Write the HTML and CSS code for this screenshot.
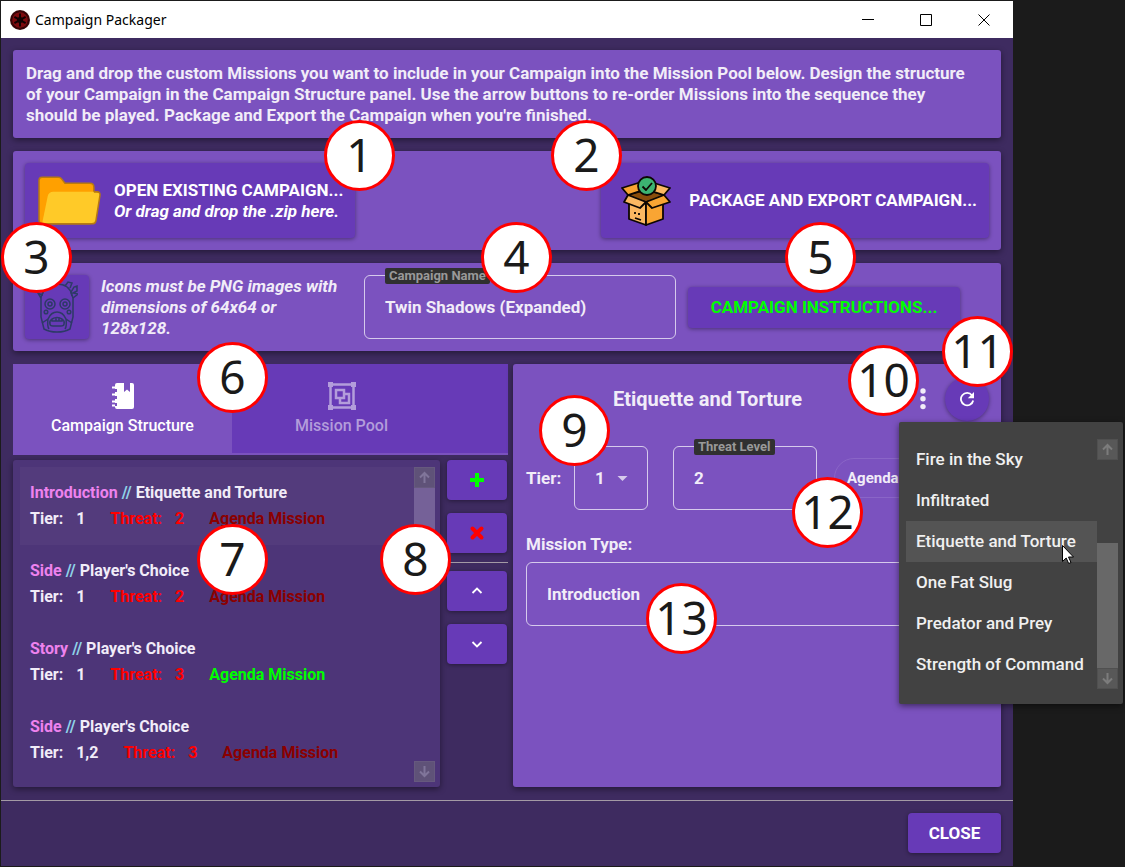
FILE: index.html
```html
<!DOCTYPE html>
<html lang="en">
<head>
<meta charset="utf-8">
<title>Campaign Packager</title>
<link rel="stylesheet" href="styles.css">
</head>
<body>
<div class="stage">
  <main class="window">
    <header class="titlebar">
      <svg class="app-icon" viewBox="0 0 20 20" aria-hidden="true">
        <circle cx="10" cy="10" r="10" fill="#3a0508"/>
        <circle cx="10" cy="10" r="7.8" fill="#7d0a0e"/>
        <path d="M10 3.5v13M4.4 6.8l11.2 6.4M4.4 13.2l11.2-6.4" stroke="#120102" stroke-width="2"/>
        <circle cx="10" cy="10" r="3" fill="#120102"/>
        <circle cx="10" cy="10" r="8.4" fill="none" stroke="#2a0305" stroke-width="1" stroke-dasharray="3 5.8"/>
      </svg>
      <h1 class="app-title">Campaign Packager</h1>
      <div class="caption">
        <button class="caption-btn" type="button" aria-label="Minimize"><svg viewBox="0 0 12 12"><path d="M0 5.500h12"/></svg></button>
        <button class="caption-btn" type="button" aria-label="Maximize"><svg viewBox="0 0 12 12"><path d="M.5.5h11v11H.5z"/></svg></button>
        <button class="caption-btn" type="button" aria-label="Close window"><svg viewBox="0 0 12 12"><path d="M.5.5l11 11M11.500.5l-11 11"/></svg></button>
      </div>
    </header>

    <div class="content">
      <section class="card intro">
        <p>Drag and drop the custom Missions you want to include in your Campaign into the Mission Pool below. Design the structure<br>of your Campaign in the Campaign Structure panel. Use the arrow buttons to re-order Missions into the sequence they<br>should be played. Package and Export the Campaign when you're finished.</p>
      </section>

      <section class="card actions">
        <button class="btn big" type="button">
          <svg class="folder" viewBox="0 0 64 48" aria-hidden="true">
            <path d="M5 1h16q2 0 3 1.500l3.500 4.500H52q4 0 4 4v5l-4 31H6q-4 0-4-4V4q0-3 3-3z" fill="#ffa000" stroke="#b87a10" stroke-width="1.500"/>
            <path d="M16 15.500h43q3.500 0 3 3.500l-4 25q-.5 3-4 3H6.500q-1.500 0-1-2.500l5-24.500q1-4.500 5.500-4.500z" fill="#ffca28"/>
            <path d="M56 15.500h3q3.500 0 3 3.500l-4 25q-.5 3-4 3H6" fill="none" stroke="#b87a10" stroke-width="1.500"/>
          </svg>
          <span class="btn-text">OPEN EXISTING CAMPAIGN...<em>Or drag and drop the .zip here.</em></span>
        </button>
        <button class="btn big" type="button">
          <svg class="box" viewBox="0 0 50 50" aria-hidden="true">
            <g stroke="#0d0703" stroke-width="1.800" stroke-linejoin="round">
              <path d="M7 19l18-5 18 5-18 9z" fill="#8a4d0b"/>
              <path d="M8 21l17 5v23L8 43z" fill="#fbb862"/>
              <path d="M25 26l17-5v22l-17 6z" fill="#f9a533"/>
              <path d="M7 19L1 12l16-5 5 7z" fill="#f9a533"/>
              <path d="M43 19l6-7-16-5-6 7z" fill="#fbb862"/>
              <path d="M7 19l18 7-6 6-16-6z" fill="#fbb862"/>
              <path d="M43 19l-18 7 6 6 18-6z" fill="#f9a533"/>
              <path d="M14 36v2M18 37v2M14 42l6 2" fill="none"/>
              <circle cx="26" cy="10" r="9" fill="#3cb371"/>
              <path d="M21.500 10.500l3.500 3.500 6-7" fill="none"/>
            </g>
          </svg>
          <span class="btn-text">PACKAGE AND EXPORT CAMPAIGN...</span>
        </button>
      </section>

      <section class="card identity">
        <button class="btn icon-btn" type="button" aria-label="Campaign icon">
          <svg viewBox="0 0 42 52" fill="none" stroke="#2d3a66" stroke-width="1.500" aria-hidden="true">
            <path d="M6 14Q9 3 21 3t15 11l1 3v19l-3 12q-5 3-13 3T8 48L5 36V16z"/>
            <path d="M5 17L2 12l4 2 1-3M36 15l-1-4 3-5 3-1v5l-4 2 5 1-5 4M29 5l3-4 4 1-2 5"/>
            <circle cx="14" cy="23" r="5"/><circle cx="14" cy="23" r="2"/>
            <circle cx="29" cy="23" r="5"/><circle cx="29" cy="23" r="2"/>
            <circle cx="10" cy="31" r="1.800"/><circle cx="33" cy="31" r="1.800"/>
            <path d="M6 42l6-4q3-7 9-7t9 7l6 4M12 38q-1 7 1 10M30 38q1 7-1 10M14 43q-1-3 2-5 5-3 10 0 3 2 2 5 0 2-3 2h-8q-3 0-3-2zM16 38v2h10v-2M20 36v4M23 36v4"/>
          </svg>
        </button>
        <p class="hint">Icons must be PNG images with<br>dimensions of 64x64 or<br>128x128.</p>
        <div class="field name-field">
          <label class="tag" for="campaign-name">Campaign Name</label>
          <input id="campaign-name" type="text" value="Twin Shadows (Expanded)">
        </div>
        <button class="btn instructions" type="button">CAMPAIGN INSTRUCTIONS...</button>
      </section>

      <div class="workspace">
        <section class="left">
          <div class="tabs" role="tablist">
            <button class="tab active" type="button" role="tab" aria-selected="true">
              <svg viewBox="0 0 28 28" aria-hidden="true"><path fill="#fff" d="M8 1h7v9l3-2.500 3 2.500V1h2q2 0 2 2v22q0 2-2 2H8q-2 0-2-2v-1h2v-3H6v-4h2v-3H6v-4h2V7H6V3q0-2 2-2z"/><path d="M3 5.500h3M3 12.500h3M3 19.500h3M3 23.500h3" stroke="#fff" stroke-width="2"/></svg>
              Campaign Structure
            </button>
            <button class="tab" type="button" role="tab" aria-selected="false">
              <svg viewBox="0 0 28 28" aria-hidden="true"><g fill="none" stroke="#b39ddb" stroke-width="2.500"><path d="M2.500 2.500h23v23h-23z"/><path d="M8 8h8v8H8z"/><path d="M16 12h5v9h-9v-5"/></g><path fill="#b39ddb" d="M0 0h5v5H0zM23 0h5v5h-5zM0 23h5v5H0zM23 23h5v5h-5z"/></svg>
              Mission Pool
            </button>
          </div>
          <div class="structure">
            <div class="list-card">
              <ul class="missions">
                <li class="mission selected"><div><span class="kind">Introduction</span> <span class="sep">//</span> Etiquette and Torture</div><div class="stats"><span>Tier:</span><span class="tier">1</span><span class="threat">Threat:</span><span class="threat num">2</span><span class="agenda">Agenda Mission</span></div></li>
                <li class="mission"><div><span class="kind">Side</span> <span class="sep">//</span> Player's Choice</div><div class="stats"><span>Tier:</span><span class="tier">1</span><span class="threat">Threat:</span><span class="threat num">2</span><span class="agenda">Agenda Mission</span></div></li>
                <li class="mission"><div><span class="kind">Story</span> <span class="sep">//</span> Player's Choice</div><div class="stats"><span>Tier:</span><span class="tier">1</span><span class="threat">Threat:</span><span class="threat num">3</span><span class="agenda on">Agenda Mission</span></div></li>
                <li class="mission"><div><span class="kind">Side</span> <span class="sep">//</span> Player's Choice</div><div class="stats"><span>Tier:</span><span class="tier">1,2</span><span class="threat">Threat:</span><span class="threat num">3</span><span class="agenda">Agenda Mission</span></div></li>
              </ul>
              <div class="scrollbar">
                <button class="scroll-btn" type="button" aria-label="Scroll up"><svg viewBox="0 0 21 21"><path d="M10.500 16V6M6 10.500L10.500 6l4.500 4.500"/></svg></button>
                <div class="thumb"></div>
                <button class="scroll-btn end" type="button" aria-label="Scroll down"><svg viewBox="0 0 21 21"><path d="M10.500 5v10M6 10.500l4.500 4.500 4.500-4.500"/></svg></button>
              </div>
            </div>
            <div class="tools">
              <button class="btn tool" type="button" aria-label="Add mission"><svg viewBox="0 0 16 16"><path d="M8 1v14M1 8h14" stroke="#0f0" stroke-width="4"/></svg></button>
              <button class="btn tool" type="button" aria-label="Remove mission"><svg viewBox="0 0 16 16"><path d="M3.500 3.500l9 9M12.500 3.500l-9 9" stroke="#f00" stroke-width="4" stroke-linecap="round"/></svg></button>
              <hr>
              <button class="btn tool" type="button" aria-label="Move up"><svg viewBox="0 0 16 16"><path d="M3.500 10L8 5.500l4.500 4.500" stroke="#fff" stroke-width="1.800" fill="none"/></svg></button>
              <button class="btn tool" type="button" aria-label="Move down"><svg viewBox="0 0 16 16"><path d="M3.500 6L8 10.500 12.500 6" stroke="#fff" stroke-width="1.800" fill="none"/></svg></button>
            </div>
          </div>
        </section>

        <section class="card details">
          <div class="details-head">
            <h2>Etiquette and Torture</h2>
            <button class="kebab" type="button" aria-label="Choose mission"><svg viewBox="0 0 6 22"><circle cx="3" cy="3" r="2.700"/><circle cx="3" cy="10.800" r="2.700"/><circle cx="3" cy="18.600" r="2.700"/></svg></button>
            <button class="btn round" type="button" aria-label="Refresh"><svg viewBox="0 0 16 16"><path d="M13 4.300A6.200 6.200 0 1 0 14.200 9.500" fill="none" stroke="#fff" stroke-width="1.800"/><path d="M15 1v6.200H8.800z" fill="#fff"/></svg></button>
          </div>
          <div class="details-row">
            <label for="tier">Tier:</label>
            <div class="field tier-field">
              <select id="tier"><option>1</option><option>2</option><option>3</option></select>
              <svg class="caret" viewBox="0 0 10 5" aria-hidden="true"><path d="M0 0h10L5 5z"/></svg>
            </div>
            <div class="field threat-field">
              <label class="tag" for="threat">Threat Level</label>
              <input id="threat" type="text" value="2">
            </div>
            <button class="chip" type="button">Agenda Mission</button>
          </div>
          <label class="type-label" for="mission-type">Mission Type:</label>
          <div class="field">
            <select id="mission-type"><option>Introduction</option><option>Side</option><option>Story</option></select>
          </div>
        </section>
      </div>
    </div>

    <footer class="footer">
      <button class="btn close" type="button">CLOSE</button>
    </footer>
  </main>

  <div class="popup">
    <ul class="menu">
      <li><button type="button">Fire in the Sky</button></li>
      <li><button type="button">Infiltrated</button></li>
      <li><button class="hover" type="button">Etiquette and Torture</button></li>
      <li><button type="button">One Fat Slug</button></li>
      <li><button type="button">Predator and Prey</button></li>
      <li><button type="button">Strength of Command</button></li>
    </ul>
    <div class="scrollbar">
      <button class="scroll-btn" type="button" aria-label="Scroll up"><svg viewBox="0 0 21 21"><path d="M10.500 16V6M6 10.500L10.500 6l4.500 4.500"/></svg></button>
      <div class="thumb"></div>
      <button class="scroll-btn" type="button" aria-label="Scroll down"><svg viewBox="0 0 21 21"><path d="M10.500 5v10M6 10.500l4.500 4.500 4.500-4.500"/></svg></button>
    </div>
  </div>
  <svg class="cursor" viewBox="0 0 12 19" aria-hidden="true"><path d="M.5.5v16l3.700-3.500 2.500 5.500 2.300-1-2.500-5.500h5z" fill="#fff" stroke="#000"/></svg>

  <span class="pin p1">1</span>
  <span class="pin p2">2</span>
  <span class="pin p3">3</span>
  <span class="pin p4">4</span>
  <span class="pin p5">5</span>
  <span class="pin p6">6</span>
  <span class="pin p7">7</span>
  <span class="pin p8">8</span>
  <span class="pin p9">9</span>
  <span class="pin p10">10</span>
  <span class="pin p11">11</span>
  <span class="pin p12">12</span>
  <span class="pin p13">13</span>
</div>
</body>
</html>
```

FILE: styles.css
```css
* { box-sizing: border-box; }
body, h1, h2, p, ul { margin: 0; padding: 0; }
ul { list-style: none; }
body { background: #1b1b1b; font: 700 17px/21px Roboto, sans-serif; color: #f1ecf8; }
button, input, select { font: inherit; color: inherit; border: 0; padding: 0; background: none; }
button { display: flex; align-items: center; justify-content: center; }
svg { display: block; flex: none; }

.stage { position: relative; display: flex; min-height: 100vh; padding: 1px 112px 1px 1px; }
.window { flex: 1; min-width: 0; display: flex; flex-direction: column; background: #3e2b60; }

.titlebar { display: flex; align-items: center; gap: 5px; height: 37px; padding-left: 9px; background: #fff; color: #000; }
.app-icon { width: 20px; height: 20px; }
.app-title { flex: 1; font: 400 14px/20px "Noto Sans", sans-serif; }
.caption { display: flex; align-self: stretch; }
.caption-btn { width: 58px; }
.caption-btn svg { width: 12px; height: 12px; fill: none; stroke: #000; stroke-width: 1; }

.content { flex: 1; display: flex; flex-direction: column; gap: 13px; padding: 12px 12px 13px; }
.card { background: #7b52bf; border-radius: 3px; box-shadow: 0 2px 6px rgba(0, 0, 0, .45); }
.btn { background: #673ab7; border-radius: 4px; box-shadow: 0 1px 4px rgba(0, 0, 0, .4); color: #fff; }
.intro { padding: 13px 12px 12px 13px; }

.actions { display: flex; justify-content: space-between; padding: 12px; }
.big { height: 75px; padding: 0 12px; gap: 12px; }
.folder { width: 65px; height: 49px; }
.box { width: 50px; height: 50px; margin: 0 6px 0 8px; }
.btn-text { text-align: left; }
.btn-text em { display: block; }

.identity { display: flex; align-items: center; gap: 12px; padding: 12px; }
.icon-btn { width: 64px; height: 64px; }
.icon-btn svg { width: 42px; height: 52px; }
.hint { width: 251px; font-style: italic; white-space: nowrap; }
.name-field { flex: 1; }
.instructions { width: 272px; height: 41px; margin-right: 29px; color: #0f0; }

.field { position: relative; height: 64px; border: 1px solid #d6caec; border-radius: 6px; }
.field input, .field select { width: 100%; height: 100%; padding: 0 20px; appearance: none; outline: 0; }
.tag { position: absolute; top: -8px; left: 20px; padding: 0 4px; border-radius: 2px; background: #303030; color: #999; font-size: 13px; line-height: 16px; white-space: nowrap; }

.workspace { flex: 1; display: flex; gap: 5px; }
.left { flex: 0 0 495px; display: flex; flex-direction: column; gap: 5px; }
.tabs { display: flex; height: 91px; background: #673ab7; border-bottom: 2px solid #7b52bf; }
.tab { width: 219px; flex-direction: column; gap: 5px; color: #b39ddb; font-size: 16px; font-weight: 500; }
.tab svg { width: 28px; height: 28px; }
.active { background: #7b52bf; color: #fff; }
.structure { flex: 1; display: flex; gap: 7px; }
.list-card { flex: 1; display: flex; padding: 7px 5px 5px 7px; background: #4d3578; border-radius: 3px; box-shadow: 0 2px 6px rgba(0, 0, 0, .45); }
.missions { flex: 1; font-size: 16px; font-weight: 700; line-height: 26px; }
.mission { height: 78px; padding: 13px 10px; }
.selected { background: #533b7c; }
.kind { color: #ee82ee; }
.sep { color: #8fd3e8; }
.stats { display: flex; }
.tier { margin-left: 13px; }
.threat { margin-left: 25px; color: #f00; }
.num { margin-left: 13px; }
.agenda { margin-left: 25px; color: #8b0000; }
.on { color: #0f0; }

.scrollbar { display: flex; flex-direction: column; width: 21px; }
.scroll-btn { width: 21px; height: 21px; background: #5f5278; border: 1px solid #66597e; }
.scroll-btn svg { width: 21px; height: 21px; fill: none; stroke: #80759a; stroke-width: 2; }
.end { margin-top: auto; }
.thumb { height: 57px; background: #756198; }

.tools { width: 61px; display: flex; flex-direction: column; gap: 13px; }
.tool { width: 60px; height: 40px; }
.tool svg { width: 16px; height: 16px; }
.tools hr { width: 100%; margin: -4px 0 -5px; border: 0; border-top: 1px solid #a39aa5; }

.details { flex: 1; min-width: 0; padding: 13px 12px 13px 13px; }
.details-head { display: flex; align-items: center; height: 44px; }
.details-head h2 { flex: 1; text-align: center; font-size: 20px; font-weight: 700; line-height: 24px; }
.kebab { width: 44px; height: 44px; margin-left: 12px; }
.kebab svg { width: 6px; height: 22px; fill: #f1ecf8; }
.round { width: 44px; height: 44px; border-radius: 50%; }
.round svg { width: 16px; height: 16px; }
.details-row { display: flex; align-items: center; margin-top: 25px; }
.details-row > label { width: 36px; }
.tier-field { width: 74px; margin: 0 25px 0 12px; }
.caret { position: absolute; top: 29px; right: 19px; width: 11px; height: 5px; fill: #d6caec; }
.threat-field { width: 144px; }
.chip { height: 40px; margin-left: 17px; padding: 0 12px; border: 1px solid #8a65c7; border-radius: 20px; font-size: 15px; white-space: nowrap; }
.type-label { display: block; margin: 24px 0 7px; }

.footer { display: flex; justify-content: flex-end; padding: 12px 12px 13px; border-top: 1px solid #a39aa5; }
.close { width: 93px; height: 40px; }

.popup { position: absolute; top: 422px; right: 2px; width: 224px; padding: 17px 5px 15px 7px; display: flex; background: #424242; border-radius: 2px; box-shadow: 0 2px 6px rgba(0, 0, 0, .5); }
.menu { flex: 1; min-width: 0; font-weight: 500; color: #f0f0f0; }
.menu button { width: 100%; height: 41px; padding: 0 10px; justify-content: flex-start; white-space: nowrap; }
.menu .hover { background: #545454; }
.popup .scrollbar { height: 250px; }
.popup .scroll-btn { background: #585858; border-color: #505050; }
.popup .scroll-btn svg { stroke: #7c7c7c; }
.popup .thumb { height: 125px; margin-top: auto; background: #686868; }
.cursor { position: absolute; top: 545px; left: 1062px; width: 12px; height: 19px; }

.pin { position: absolute; width: 71px; height: 71px; border: 3px solid #f00; border-radius: 50%; background: #fff; color: #1a1a1a; font: 400 46px/62px "Noto Sans", sans-serif; text-align: center; }
.p1 { left: 324px; top: 120px; }
.p2 { left: 551px; top: 120px; }
.p3 { left: 1px; top: 222px; }
.p4 { left: 481px; top: 222px; }
.p5 { left: 785px; top: 222px; }
.p6 { left: 197px; top: 342px; }
.p7 { left: 197px; top: 524px; }
.p8 { left: 380px; top: 524px; }
.p9 { left: 539px; top: 395px; }
.p10 { left: 848px; top: 345px; }
.p11 { left: 942px; top: 316px; }
.p12 { left: 792px; top: 477px; }
.p13 { left: 646px; top: 583px; }
```
